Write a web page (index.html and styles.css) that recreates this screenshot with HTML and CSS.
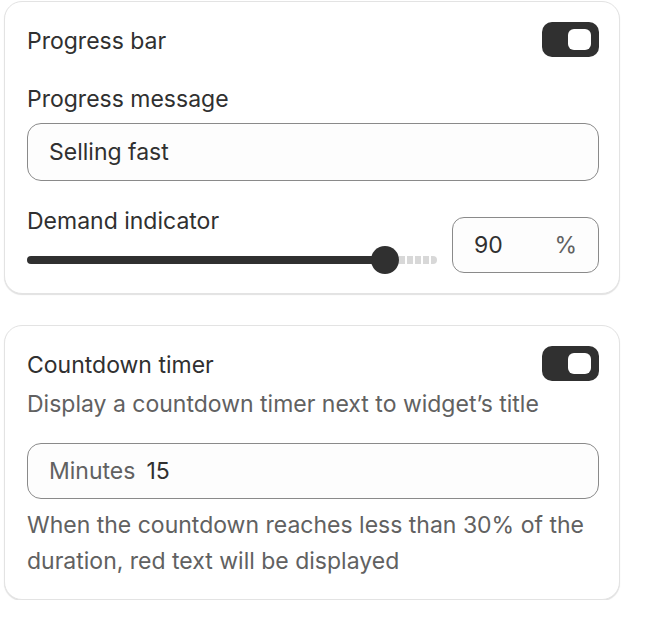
FILE: index.html
```html
<!DOCTYPE html>
<html>
<head>
<meta charset="utf-8">
<link rel="stylesheet" href="styles.css">
</head>
<body>
<div class="stack">
  <section class="card card-progress">
    <div class="header">
      <span class="title">Progress bar</span>
      <span class="toggle"><span class="knob"></span></span>
    </div>
    <label class="label label-message">Progress message</label>
    <div class="field"><span class="value">Selling fast</span></div>
    <div class="demand">
      <div class="demand-left">
        <label class="label">Demand indicator</label>
        <div class="slider">
          <span class="fill"></span>
          <span class="thumb"></span>
          <span class="rest"></span>
        </div>
      </div>
      <div class="field field-num"><span class="value">90</span><span class="suffix">%</span></div>
    </div>
  </section>

  <section class="card card-timer">
    <div class="header">
      <span class="title">Countdown timer</span>
      <span class="toggle"><span class="knob"></span></span>
    </div>
    <p class="subdued desc">Display a countdown timer next to widget’s title</p>
    <div class="field field-min"><span class="prefix">Minutes</span><span class="value">15</span></div>
    <p class="subdued help">When the countdown reaches less than 30% of the duration, red text will be displayed</p>
  </section>
</div>
</body>
</html>
```
FILE: styles.css
```css
* { box-sizing: border-box; }
html, body { margin: 0; background: #ffffff; }
body {
  padding: 1px 28px 0 4px;
  font-family: Inter, "Noto Sans", "Liberation Sans", sans-serif;
  font-size: 23px;
  line-height: 28px;
  color: #303030;
}
.stack { display: flex; flex-direction: column; gap: 31px; }
.card {
  background: #fff;
  border: 1px solid #e3e3e3;
  border-radius: 18px;
  box-shadow: 0 1px 1px rgba(0,0,0,0.12);
  padding: 20px 20px 20px 22px;
}
.card-progress { height: 293px; }
.card-timer { height: 275px; }
.header { display: flex; justify-content: space-between; align-items: flex-start; }
.title { margin-top: 5px; }
.toggle {
  width: 57px; height: 35px;
  background: #303030;
  border-radius: 10px;
  display: flex; align-items: center; justify-content: flex-end;
  padding-right: 8px;
}
.knob {
  width: 23px; height: 21px;
  background: #fff;
  border-radius: 6px;
}
.label { display: block; }
.label-message { margin-top: 28px; }
.field {
  margin-top: 10px;
  height: 58px;
  border: 1px solid #8a8a8a;
  border-radius: 14px;
  background: #fdfdfd;
  display: flex; align-items: center;
  padding: 0 20px 0 21px;
}
.value { color: #303030; }
.demand {
  margin-top: 36px;
  display: flex; align-items: flex-start; gap: 15px;
}
.demand-left { flex: 1; margin-top: -10px; }
.slider {
  margin-top: 11px;
  display: flex; align-items: center;
  height: 28px;
}
.fill { flex: 1; height: 8px; background: #303030; border-radius: 4px 0 0 4px; margin-right: -6px; }
.thumb { width: 28px; height: 28px; border-radius: 50%; background: #303030; }
.rest {
  width: 38px; height: 8px;
  border-radius: 0 4px 4px 0;
  background: repeating-linear-gradient(90deg, #d8d8d8 0 6px, #ffffff 6px 8px);
}
.field-num {
  margin-top: 0;
  width: 147px; height: 56px;
  border-radius: 12px;
  justify-content: space-between;
  padding: 0 21px 0 21px;
}
.suffix { color: #616161; }
.subdued { color: #616161; margin: 0; }
.desc { margin-top: 9px; }
.field-min { margin-top: 25px; height: 56px; gap: 11px; }
.prefix { color: #616161; }
.help { margin-top: 8px; line-height: 36px; }
```
